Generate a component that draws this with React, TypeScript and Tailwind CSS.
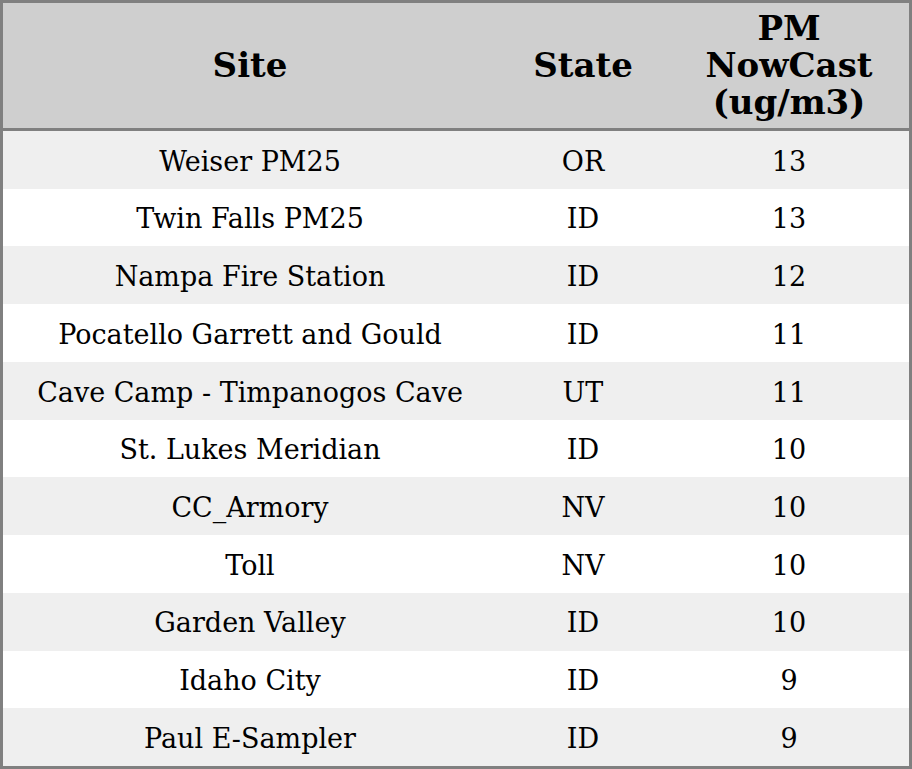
const rows = [
  { site: "Weiser PM25", state: "OR", pm: "13" },
  { site: "Twin Falls PM25", state: "ID", pm: "13" },
  { site: "Nampa Fire Station", state: "ID", pm: "12" },
  { site: "Pocatello Garrett and Gould", state: "ID", pm: "11" },
  { site: "Cave Camp - Timpanogos Cave", state: "UT", pm: "11" },
  { site: "St. Lukes Meridian", state: "ID", pm: "10" },
  { site: "CC_Armory", state: "NV", pm: "10" },
  { site: "Toll", state: "NV", pm: "10" },
  { site: "Garden Valley", state: "ID", pm: "10" },
  { site: "Idaho City", state: "ID", pm: "9" },
  { site: "Paul E-Sampler", state: "ID", pm: "9" },
];

export default function App() {
  return (
    <div className="w-[912px] h-[769px] bg-white font-['DejaVu_Serif',serif] text-black">
      <div className="w-[912px] h-[769px] border-[3px] border-[#808080] flex flex-col">
        {/* Header */}
        <div className="flex h-[128px] bg-[#cfcfcf] border-b-[3px] border-[#808080] text-[34px] font-bold leading-[37px]">
          <div className="w-[494px] flex items-center justify-center">Site</div>
          <div className="w-[172px] flex items-center justify-center">State</div>
          <div className="w-[240px] flex flex-col items-center justify-center text-center">
            <div>PM</div>
            <div>NowCast</div>
            <div>(ug/m3)</div>
          </div>
        </div>

        {/* Body rows */}
        <div className="flex-1 flex flex-col text-[27px]">
          {rows.map((r, i) => (
            <div
              key={i}
              className={`flex-1 flex items-center pt-[4px] ${i % 2 === 0 ? "bg-[#efefef]" : "bg-white"}`}
            >
              <div className="w-[494px] text-center">{r.site}</div>
              <div className="w-[172px] text-center">{r.state}</div>
              <div className="w-[240px] text-center">{r.pm}</div>
            </div>
          ))}
        </div>
      </div>
    </div>
  );
}
